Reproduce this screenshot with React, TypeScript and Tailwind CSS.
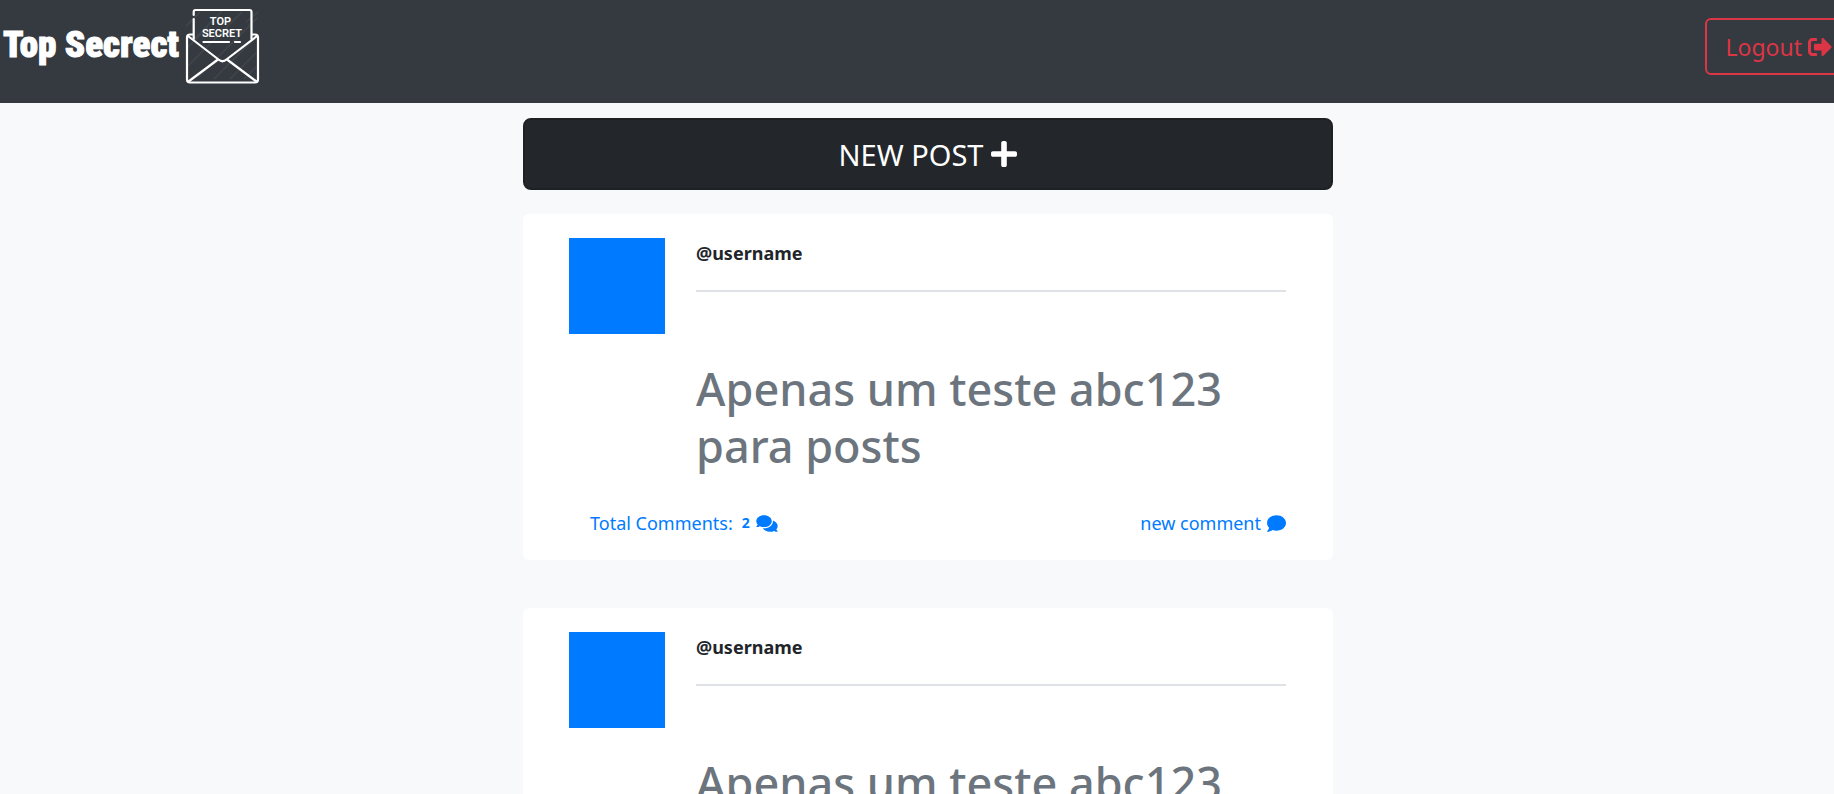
import { FaComment, FaComments, FaPlus, FaSignOutAlt } from "react-icons/fa";

type Post = { id: number; username: string; text: string; comments: number };

const posts: Post[] = [
  { id: 1, username: "@username", text: "Apenas um teste abc123 para posts", comments: 2 },
  { id: 2, username: "@username", text: "Apenas um teste abc123 para posts", comments: 2 },
];

function EnvelopeLogo() {
  return (
    <svg viewBox="0 0 76 76" className="size-[76px]" fill="none" stroke="#fff" aria-hidden="true">
      <g stroke="#41464c" strokeWidth="1.5">
        <path d="M2 18 16 4M10 31 38 3M4 58 58 4M14 69 73 10M30 71 70 31M46 71 72 45M60 71 72 59M3 40 24 19M62 14 74 4" />
      </g>
      <path
        d="M9.500 26.500H6Q3 26.500 3 29.500V71.500Q3 74.500 6 74.500H71Q74 74.500 74 71.500V29.500Q74 26.500 71 26.500H67.500M67.500 31V4Q67.500 2 65.500 2H11.500Q9.700 2 9.700 4V7M9.700 11V31"
        strokeWidth="2.2"
        strokeLinecap="round"
      />
      <path
        d="M4 28 34.500 51.500Q38.500 55 42.500 51.500L73 28M4.500 73.500 34 51.500M72.500 73.500 43 51.500"
        strokeWidth="2.2"
        strokeLinecap="round"
      />
      <path d="M19.500 34H45M51 34H56" strokeWidth="2.2" strokeLinecap="round" />
      <g fill="#fff" stroke="none" fontFamily="Roboto, sans-serif" fontWeight="600" textAnchor="middle">
        <text x="36.500" y="17" fontSize="11">TOP</text>
        <text x="38" y="28.500" fontSize="11">SECRET</text>
      </g>
    </svg>
  );
}

function PostCard({ post }: { post: Post }) {
  return (
    <article className="rounded-md bg-white px-[47px] pt-6 pb-[21px]">
      <div className="-ml-px flex items-start gap-[31px]">
        <div className="size-24 shrink-0 bg-[#007bff]" />
        <div className="min-w-0 flex-1">
          <p className="border-b-2 border-[#dee2e6] pt-px pb-[23px] text-[18px] leading-7 font-bold">{post.username}</p>
          <h2 className="mt-[68px] text-[45px] leading-[57px] font-medium text-[#6c757d]">{post.text}</h2>
        </div>
      </div>
      <div className="mt-[33px] flex items-center justify-between pl-5 text-[18px] leading-8 text-[#007bff]">
        <a href="#comments" className="flex items-center">
          Total Comments:
          <span className="mr-[6px] ml-[9px] text-sm font-bold">{post.comments}</span>
          <FaComments className="h-[19px] w-[22px]" />
        </a>
        <a href="#new-comment" className="flex items-center gap-[6px]">
          new comment
          <FaComment className="size-[19px]" />
        </a>
      </div>
    </article>
  );
}

export default function App() {
  return (
    <div className="min-h-screen overflow-x-clip bg-[#f8f9fa] pb-12 font-['Noto_Sans',sans-serif] text-[#212529]">
      <div className="-mr-[22px]">
        <header className="flex items-start justify-between bg-[#343a40] pt-2 pr-1 pb-[19px] pl-[3px]">
          <a href="#home" className="flex items-center gap-[5px] text-white">
            <span className="pb-1 font-['Impact','Roboto_Condensed',sans-serif] text-[37px] leading-none font-black [-webkit-text-stroke:1px_white]">
              Top Secrect
            </span>
            <EnvelopeLogo />
          </a>
          <button
            type="button"
            className="mt-[10px] flex h-[57px] items-center gap-[6px] rounded-md border-2 border-[#dc3545] px-[18px] pt-[2px] text-[23px] text-[#dc3545]"
          >
            Logout
            <FaSignOutAlt className="mb-[2px] size-6" />
          </button>
        </header>
        <main className="mx-auto flex w-[810px] max-w-full flex-col pt-[15px]">
          <button
            type="button"
            className="mb-6 flex h-[72px] items-center justify-center gap-2 rounded-lg border-2 border-[#1d2124] bg-[#23272b] pt-[2px] text-[29px] text-white"
          >
            NEW POST
            <FaPlus className="mb-[2px] h-[30px] w-[26px]" />
          </button>
          <div className="flex flex-col gap-12">
            {posts.map((post) => (
              <PostCard key={post.id} post={post} />
            ))}
          </div>
        </main>
      </div>
    </div>
  );
}
